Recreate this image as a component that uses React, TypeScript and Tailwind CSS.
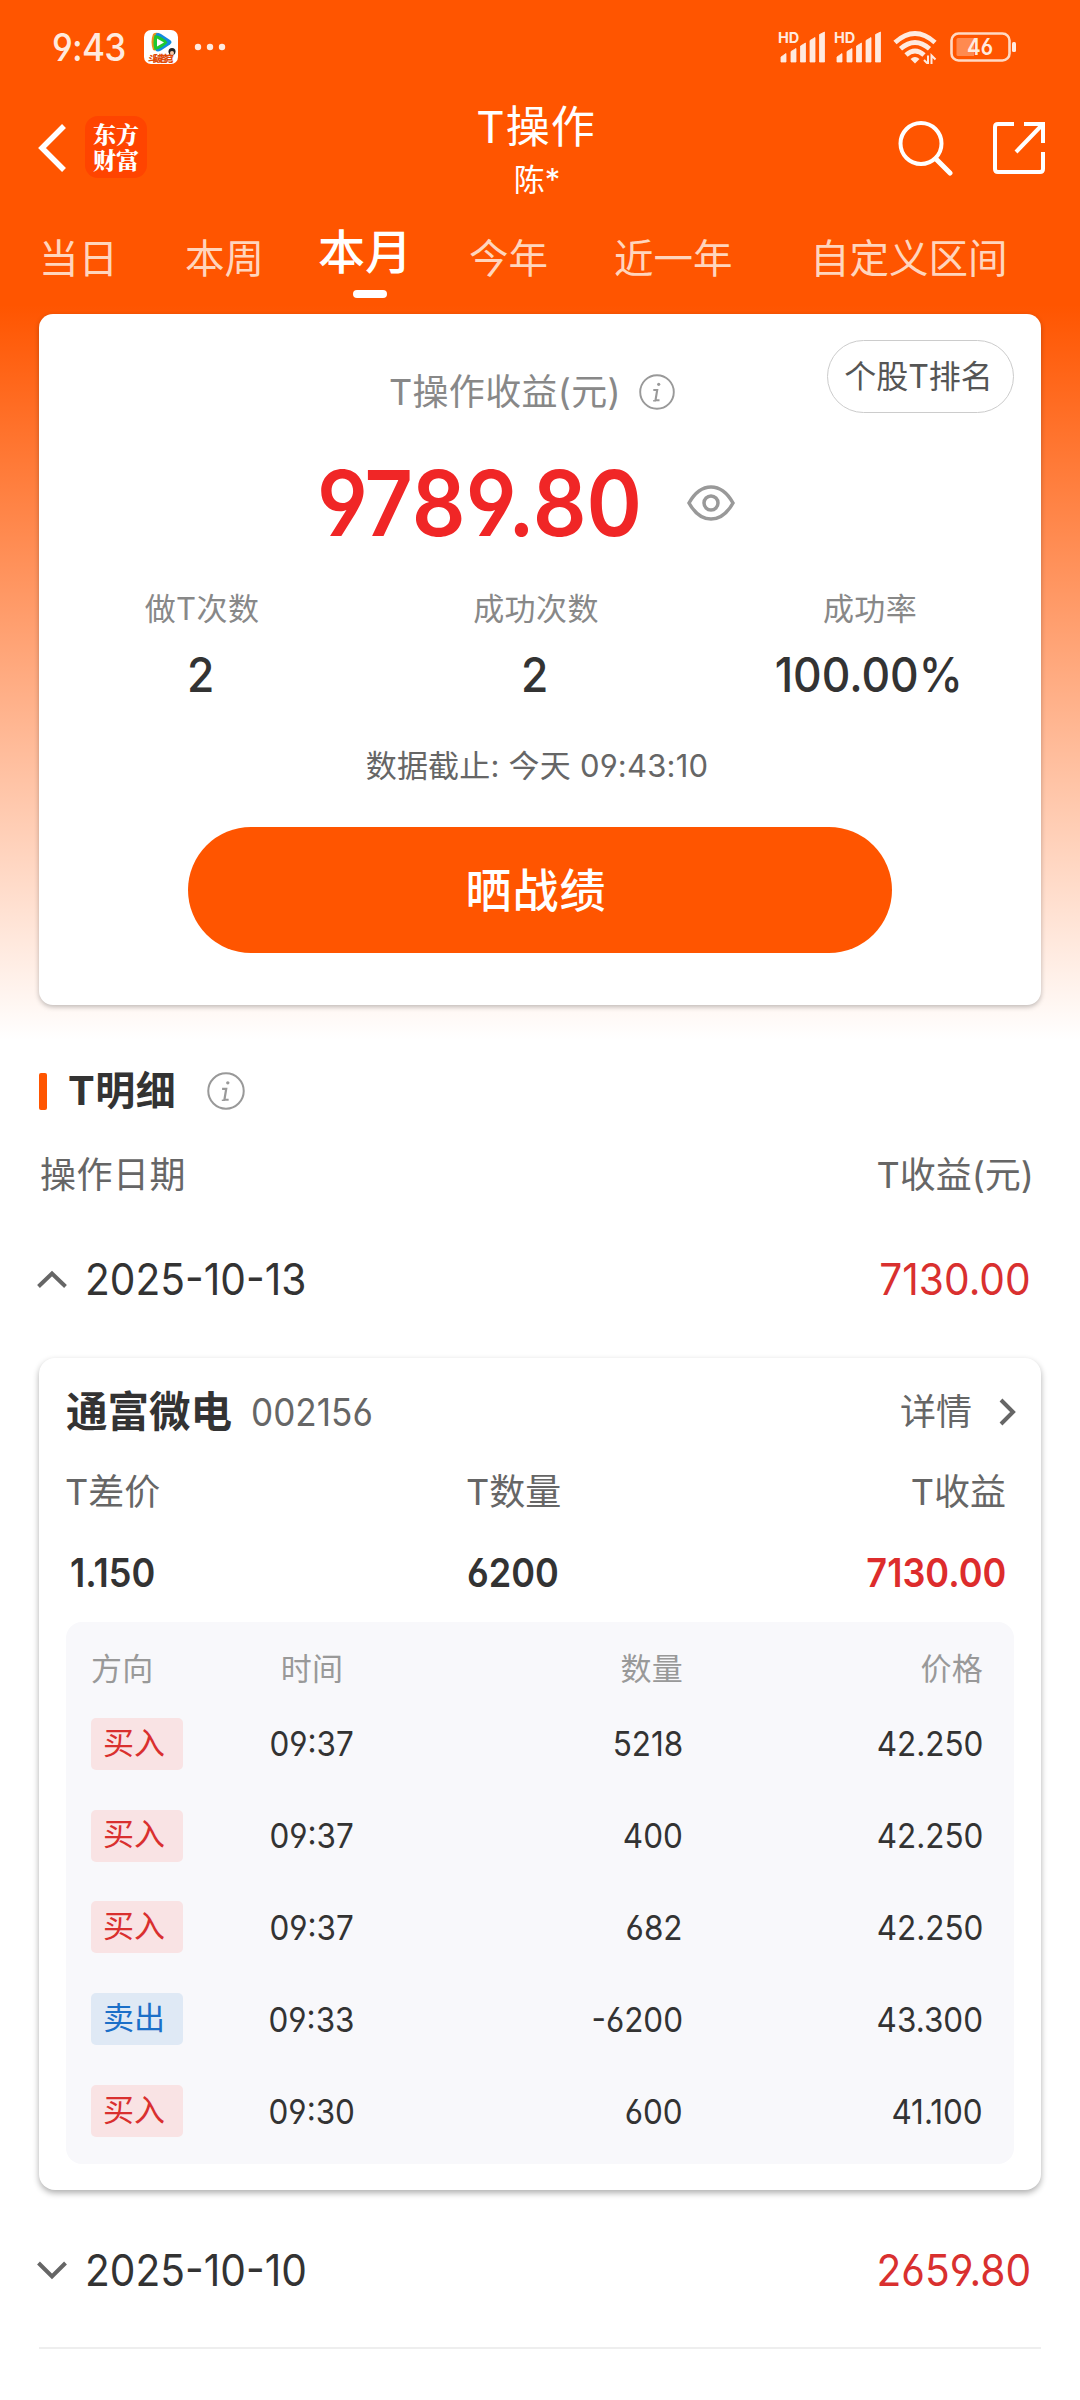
import type { ReactNode } from 'react'

const tabs = [
  { label: '当日', className: 'ml-[39px] w-[80px]' },
  { label: '本周', className: 'ml-[66px] w-[80px]' },
  { label: '本月', active: true, className: 'ml-[53px] w-[94px]' },
  { label: '今年', className: 'ml-[57px] w-[80px]' },
  { label: '近一年', className: 'ml-[65px] w-[120px]' },
  { label: '自定义区间', className: 'ml-[76px] w-[200px]' },
]

const stats = [
  { label: '做T次数', value: '2' },
  { label: '成功次数', value: '2' },
  { label: '成功率', value: '100.00%' },
]

const trades = [
  { side: '买入', time: '09:37', amount: '5218', price: '42.250' },
  { side: '买入', time: '09:37', amount: '400', price: '42.250' },
  { side: '买入', time: '09:37', amount: '682', price: '42.250' },
  { side: '卖出', time: '09:33', amount: '-6200', price: '43.300' },
  { side: '买入', time: '09:30', amount: '600', price: '41.100' },
]

const origins = {
  left: 'origin-left',
  center: 'origin-center',
  right: 'origin-right',
}

// Slightly condensed figures
function Num({ from = 'left', children }: { from?: keyof typeof origins; children: ReactNode }) {
  return <span className={`inline-block scale-x-[0.925] ${origins[from]}`}>{children}</span>
}

function Signal() {
  return (
    <svg width="48" height="32" viewBox="0 0 48 32" fill="#ffeadf" className="overflow-visible">
      <text x="-1" y="12" fontSize="14.5" fontWeight="700">HD</text>
      <path d="M2 31v-5l5-3.500v8.500zM12 31v-10.500l5-3v13.500zM21.500 31v-16l5-3v19zM31 31v-21.500l5-3v24.500zM40.500 31v-27.500l5-2.500v30z" stroke="#ffeadf" strokeWidth="0.800" />
    </svg>
  )
}

function Info({ size }: { size: number }) {
  return (
    <svg width={size} height={size} viewBox="0 0 36 36" fill="none" stroke="#999">
      <circle cx="18" cy="18" r="16.800" strokeWidth="1.900" />
      <circle cx="19.700" cy="10.300" r="1.600" fill="#999" stroke="none" />
      <path d="M14.300 16h3.900l-1.700 10.300h4" strokeWidth="2.100" />
      <path d="M14 26.800h3" strokeWidth="1.300" />
    </svg>
  )
}

function Chevron({ up }: { up?: boolean }) {
  return (
    <svg width="30" height="19" viewBox="0 0 30 19" fill="none" stroke="#666" strokeWidth="4">
      <path d={up ? 'M1.500 16.500l13.500-13 13.500 13' : 'M1.500 2l13.500 13.500 13.500-13.500'} />
    </svg>
  )
}

function DateRow({ date, profit, open }: { date: string; profit: string; open?: boolean }) {
  return (
    <div className="flex h-[60px] items-center pr-[49px] pl-[37px] text-[44px]">
      <Chevron up={open} />
      <span className="ml-[18px] text-[#333]">
        <Num>{date}</Num>
      </span>
      <span className="ml-auto text-[#d9302f]">
        <Num from="right">{profit}</Num>
      </span>
    </div>
  )
}

function Metric({ label, className, children }: { label: string; className: string; children: ReactNode }) {
  return (
    <div className={className}>
      <div className="h-[48px] text-[36px] leading-[48px] text-[#666]">{label}</div>
      <div className="mt-[33px] h-[48px] text-[39px] leading-[48px] font-semibold">{children}</div>
    </div>
  )
}

export default function App() {
  return (
    <div className="h-[2400px] w-[1080px] overflow-hidden bg-white bg-[linear-gradient(180deg,#ff5500_0px,#ff5500_305px,#ffffff_1040px)] font-[Inter,'Noto_Sans_CJK_SC',sans-serif] whitespace-nowrap text-[#333] [font-feature-settings:'cv03','cv04']">
      <div className="flex h-[94px] items-center pl-[52px] text-[#ffeadf]">
        <span className="w-[74px] text-[38px] leading-none font-medium tracking-[-0.8px]">
          <Num>9:43</Num>
        </span>
        <svg className="ml-[18px]" width="34" height="34" viewBox="0 0 34 34">
          <rect width="34" height="34" rx="7" fill="#fff" />
          <path d="M9 4q-3 8 0 16 3 1 6 0V3q-4-1-6 1z" fill="#e8931c" />
          <path d="M12 3.500q2-1 5 0.500l9 6q3 2 0 4.500l-9 6q-3 1.500-5 0.500-3-9 0-17.500z" fill="#118be0" />
          <path d="M10.500 5q8 1 13 7.500-5 6-13 7.500-2-7 0-15z" fill="#1dc830" />
          <path d="M13 8.500l7 4-7 4z" fill="#fff" />
          <circle cx="28" cy="21.500" r="3.500" fill="#222" />
          <circle cx="28" cy="23" r="2" fill="#f7c7a5" />
          <text x="4" y="31.500" fontSize="9" fontWeight="900" fill="#e04a08" textLength="26">斗破苍穹</text>
        </svg>
        <svg className="ml-[16px]" width="32" height="8" viewBox="0 0 32 8" fill="#ffeadf">
          <circle cx="4" cy="4" r="3.200" />
          <circle cx="16" cy="4" r="3.200" />
          <circle cx="28" cy="4" r="3.200" />
        </svg>
        <div className="mr-[63px] ml-auto flex items-center">
          <Signal />
          <span className="w-[8px]" />
          <Signal />
          <svg className="ml-[10px]" width="44" height="34" viewBox="0 0 44 34" fill="none" stroke="#ffeadf" strokeWidth="4.800">
            <path d="M2 12.500q20-18 40 0M7.500 18.800q14.500-12.500 29 0M13 25q9-8 18 0" />
            <path d="M17.500 29q4.500-4 9 0l-4.500 4.500z" fill="#ffeadf" stroke="none" />
            <path d="M35 25.500v8.500l-4-4M38.500 34v-8.500l4 4" strokeWidth="2" />
          </svg>
          <svg className="ml-[13px]" width="67" height="30" viewBox="0 0 67 30">
            <rect x="1.500" y="1.500" width="58" height="27" rx="7" fill="none" stroke="#ffd9c4" strokeWidth="2.600" />
            <path d="M8 6h16v18H8q-1.500 0-1.500-1.500v-15Q6.500 6 8 6z" fill="#ff8a50" />
            <rect x="62" y="10" width="4" height="10" rx="1.500" fill="#ffeadf" />
            <text x="17" y="23" fontSize="23" fontWeight="600" fill="#ffeadf" textLength="26" lengthAdjust="spacingAndGlyphs">46</text>
          </svg>
        </div>
      </div>

      <header className="flex h-[118px] pl-[37px] text-white">
        <svg className="mt-[30px]" width="30" height="48" viewBox="0 0 30 48" fill="none" stroke="#fff" strokeWidth="5.500">
          <path d="M27 2L5 24l22 22" />
        </svg>
        <div className="mt-[22px] ml-[18px] flex h-[62px] w-[62px] items-center justify-center rounded-[13px] bg-[#ff4400] font-['Noto_Serif_CJK_SC','Noto_Sans_CJK_SC',serif] text-[23px] leading-[26px] font-black">
          <span className="w-[46px] whitespace-normal">东方财富</span>
        </div>
        <div className="ml-[287px] w-[204px] text-center">
          <div className="mt-[6px] text-[44px] leading-[54px] tracking-[1px]">T操作</div>
          <div className="mt-[6px] pl-[2px] text-[31px] leading-[40px]">陈*</div>
        </div>
        <svg className="mt-[26px] ml-[259px]" width="56" height="56" viewBox="0 0 56 56" fill="none" stroke="#fff" strokeWidth="4" strokeLinecap="round">
          <circle cx="24" cy="23.500" r="20.500" />
          <path d="M39 39l14 14" strokeWidth="5" />
        </svg>
        <svg className="mt-[27px] ml-[39px]" width="54" height="54" viewBox="0 0 54 54" fill="none" stroke="#fff" strokeWidth="4">
          <path d="M22 3H6Q3 3 3 6v42q0 3 3 3h42q3 0 3-3V31M32 3h19v19M50 4L24 31" />
        </svg>
      </header>

      <nav className="flex h-[102px]">
        {tabs.map((tab) =>
          tab.active ? (
            <div key={tab.label} className={`flex flex-col items-center ${tab.className}`}>
              <span className="mt-[10px] text-[47px] leading-[60px] font-medium text-white">{tab.label}</span>
              <span className="mt-[8px] ml-[10px] h-[8px] w-[34px] rounded-full bg-white" />
            </div>
          ) : (
            <div key={tab.label} className={`mt-[17px] text-[39.500px] leading-[60px] text-[#ffd5bd] ${tab.className}`}>
              {tab.label}
            </div>
          ),
        )}
      </nav>

      <section className="relative mx-[39px] h-[691px] rounded-[14px] bg-white pt-[52px] shadow-[0_2px_5px_rgba(0,0,0,0.25)]">
        <div className="absolute top-[26px] right-[27px] flex h-[73px] w-[187px] items-center justify-center rounded-full border-[1.5px] border-[#ccc] pr-[4px] text-[32px] text-[#555]">
          个股T排名
        </div>
        <div className="flex h-[52px] items-center pl-[350px] text-[36px] tracking-[0.3px] text-[#888]">
          <span className="w-[234px]">T操作收益(元)</span>
          <span className="ml-[16px]">
            <Info size={36} />
          </span>
        </div>
        <div className="mt-[35px] flex h-[100px] items-center pl-[278px]">
          <span className="w-[332px] text-[91px] leading-none font-semibold text-[#f02626]">
            <Num>9789.80</Num>
          </span>
          <svg className="ml-[37px]" width="50" height="38" viewBox="0 0 50 38" fill="none" stroke="#999" strokeWidth="3.500">
            <path d="M3 19Q12 3 25 3t22 16Q38 35 25 35T3 19z" />
            <circle cx="25" cy="19" r="7" />
          </svg>
        </div>
        <div className="mt-[32px] ml-[-4px] flex">
          {stats.map((stat) => (
            <div key={stat.label} className="w-[334px] text-center">
              <div className="h-[48px] text-[31px] leading-[48px] tracking-[0.4px] text-[#888]">{stat.label}</div>
              <div className="mt-[12px] pr-[2px] text-[48px] leading-[60px] font-medium">
                <Num from="center">{stat.value}</Num>
              </div>
            </div>
          ))}
        </div>
        <div className="mt-[37px] pr-[6px] text-center text-[31px] leading-[48px] tracking-[0.2px] text-[#666]">数据截止: 今天 09:43:10</div>
        <button className="mx-auto mt-[37px] block h-[126px] w-[704px] rounded-full bg-[#ff5500] pr-[8px] text-[46px] font-medium tracking-[1px] text-white">
          晒战绩
        </button>
      </section>

      <div className="mt-[62px] flex h-[48px] items-center pl-[39px]">
        <span className="h-[37px] w-[8px] rounded-[2px] bg-[#ff5500]" />
        <h2 className="ml-[21px] text-[40px] font-bold tracking-[0.5px]">T明细</h2>
        <span className="ml-[31px]">
          <Info size={38} />
        </span>
      </div>
      <div className="mt-[36px] flex h-[48px] items-center justify-between pr-[46px] pl-[40px] text-[36px] tracking-[0.5px] text-[#666]">
        <span>操作日期</span>
        <span className="tracking-normal">T收益(元)</span>
      </div>
      <div className="mt-[50px]">
        <DateRow date="2025-10-13" profit="7130.00" open />
      </div>

      <section className="mx-[39px] mt-[49px] h-[832px] rounded-[16px] bg-white pt-[26px] shadow-[0_3px_6px_rgba(0,0,0,0.32)]">
        <div className="flex h-[56px] items-center pr-[25px] pl-[27px]">
          <span className="text-[41.500px] font-bold">通富微电</span>
          <span className="ml-[19px] text-[38px] text-[#666]">
            <Num>002156</Num>
          </span>
          <span className="ml-auto text-[36px] text-[#666]">详情</span>
          <svg className="ml-[27px]" width="17" height="28" viewBox="0 0 17 28" fill="none" stroke="#666" strokeWidth="4">
            <path d="M2 2l12 12L2 26" />
          </svg>
        </div>
        <div className="mt-[28px] flex pr-[35px] pl-[26px]">
          <Metric label="T差价" className="w-[401px]">
            <span className="ml-[5px]">
              <Num>1.150</Num>
            </span>
          </Metric>
          <Metric label="T数量" className="w-[200px]">
            <span className="ml-[1px]">
              <Num>6200</Num>
            </span>
          </Metric>
          <Metric label="T收益" className="flex-1 text-right">
            <span className="text-[#dd2c2c]">
              <Num from="right">7130.00</Num>
            </span>
          </Metric>
        </div>
        <div className="mx-[27px] mt-[25px] h-[542px] rounded-[16px] bg-[#f8f8fb] pt-[23px] pr-[31px] pl-[25px] text-[34px]">
          <div className="flex h-[48px] items-center text-[31px] tracking-[0.3px] text-[#999]">
            <span className="w-[130px]">方向</span>
            <span className="w-[182px] text-center">时间</span>
            <span className="w-[280px] text-right">数量</span>
            <span className="flex-1 text-right">价格</span>
          </div>
          <div className="mt-[5px]">
            {trades.map((trade, i) => (
              <div key={i} className="flex h-[91.800px] items-center">
                <span className="w-[130px]">
                  <span
                    className={`flex h-[52px] w-[92px] items-center rounded-[5px] pb-[2px] pl-[12px] text-[31px] ${
                      trade.side === '买入' ? 'bg-[#f9e3e4] text-[#d9302f]' : 'bg-[#dfe9f5] text-[#1b6fc8]'
                    }`}
                  >
                    {trade.side}
                  </span>
                </span>
                <span className="w-[182px] text-center">
                  <Num from="center">{trade.time}</Num>
                </span>
                <span className="w-[280px] text-right">
                  <Num from="right">{trade.amount}</Num>
                </span>
                <span className="flex-1 text-right">
                  <Num from="right">{trade.price}</Num>
                </span>
              </div>
            ))}
          </div>
        </div>
      </section>

      <div className="mt-[50px]">
        <DateRow date="2025-10-10" profit="2659.80" />
      </div>
      <div className="mx-[39px] mt-[47px] h-[2px] bg-[#eee]" />
    </div>
  )
}
